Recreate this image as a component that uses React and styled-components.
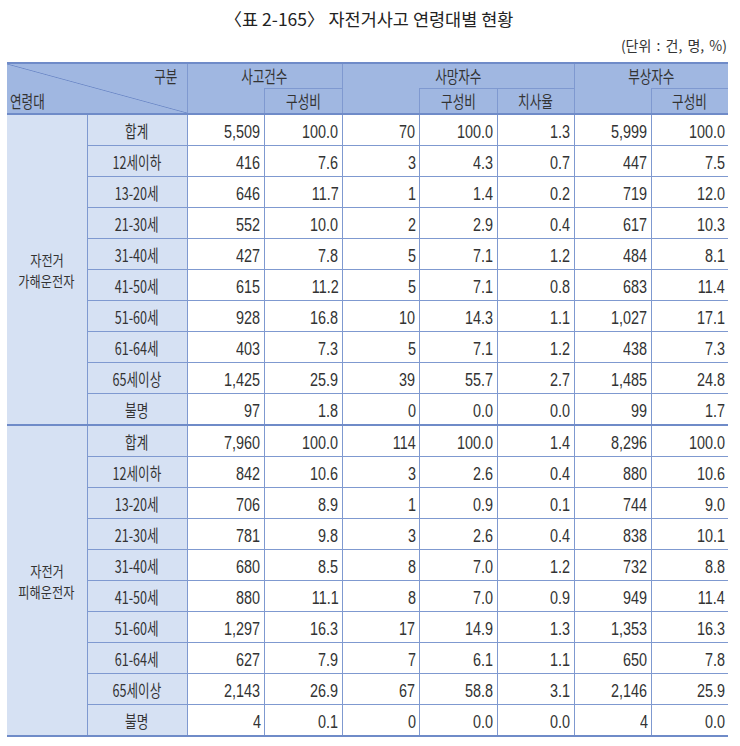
import React from "react";
import styled, { createGlobalStyle } from "styled-components";

const GlobalStyle = createGlobalStyle`
  html, body {
    margin: 0;
    padding: 0;
    background: #fff;
  }
  body {
    font-family: "Noto Sans CJK KR", sans-serif;
    color: #333;
  }
`;

const Page = styled.div`
  width: 740px;
  padding: 0 12px 0 7px;
  box-sizing: border-box;
`;

const Title = styled.h1`
  margin: 0;
  padding-top: 8px;
  height: 36px;
  box-sizing: border-box;
  text-align: center;
  font-weight: 400;
  font-size: 17.5px;
  line-height: 22px;
  color: #222;
  padding-left: 3px;
`;

const Unit = styled.div`
  text-align: right;
  font-size: 14px;
  line-height: 18px;
  height: 26px;
  word-spacing: 2px;
  padding-right: 1px;
  color: #333;
`;

const Table = styled.table`
  width: 721px;
  border-collapse: collapse;
  table-layout: fixed;
  font-size: 17px;
  border-top: 2px solid #6f8bc8;
  border-bottom: 2px solid #6f8bc8;
`;

// condensed look of the source document: glyphs are squeezed horizontally
const Txt = styled.span`
  display: inline-block;
  white-space: nowrap;
  transform: scaleX(${(p) => p.$sx || 0.74});
  transform-origin: ${(p) => p.$origin || "center"} center;
`;

const NumTxt = styled(Txt)`
  font-family: "Liberation Sans", Arial, sans-serif;
  font-size: 18px;
`;

const Head = styled.th`
  background: #a0b7e1;
  font-weight: 400;
  height: 24px;
  padding: 0;
  line-height: 20px;
  border: 1px solid #7f99d0;
  border-top: ${(p) => (p.$open ? "hidden" : "1px solid #7f99d0")};
  text-align: center;
  &:first-child {
    border-left: none;
  }
  &:last-child {
    border-right: none;
  }
`;

const Corner = styled.th`
  background: #a0b7e1
    linear-gradient(
      to top right,
      transparent calc(50% - 0.8px),
      #6f8bc8 50%,
      transparent calc(50% + 0.8px)
    );
  font-weight: 400;
  padding: 0;
  border: 1px solid #7f99d0;
  border-left: none;
`;

const CornerInner = styled.div`
  height: 49px;
  display: flex;
  flex-direction: column;
  justify-content: space-between;
  padding: 1px 9px 1px 3px;
  box-sizing: border-box;
  line-height: 22px;
`;

const CornerTop = styled.div`
  align-self: flex-end;
`;

const CornerBottom = styled.div`
  align-self: flex-start;
`;

const Group = styled.td`
  background: #d6e1f3;
  text-align: center;
  font-size: 14.5px;
  line-height: 21px;
  padding: 0;
  border: 1px solid #7f99d0;
  border-left: none;
`;

const GroupLine = styled.div`
  display: flex;
  justify-content: center;
`;

const Label = styled.td`
  background: #d6e1f3;
  text-align: center;
  padding: 0;
  height: 30px;
  border: 1px solid #7f99d0;
`;

const Num = styled.td`
  background: #fff;
  text-align: right;
  padding: 0 3px 0 0;
  border: 1px solid #7f99d0;
  &:last-child {
    border-right: none;
  }
`;

const Row = styled.tr`
  border-top: ${(p) => (p.$first ? "2px solid #6f8bc8" : "none")};
`;

const groups = [
  {
    name: ["자전거", "가해운전자"],
    rows: [
      ["합계", "5,509", "100.0", "70", "100.0", "1.3", "5,999", "100.0"],
      ["12세이하", "416", "7.6", "3", "4.3", "0.7", "447", "7.5"],
      ["13-20세", "646", "11.7", "1", "1.4", "0.2", "719", "12.0"],
      ["21-30세", "552", "10.0", "2", "2.9", "0.4", "617", "10.3"],
      ["31-40세", "427", "7.8", "5", "7.1", "1.2", "484", "8.1"],
      ["41-50세", "615", "11.2", "5", "7.1", "0.8", "683", "11.4"],
      ["51-60세", "928", "16.8", "10", "14.3", "1.1", "1,027", "17.1"],
      ["61-64세", "403", "7.3", "5", "7.1", "1.2", "438", "7.3"],
      ["65세이상", "1,425", "25.9", "39", "55.7", "2.7", "1,485", "24.8"],
      ["불명", "97", "1.8", "0", "0.0", "0.0", "99", "1.7"],
    ],
  },
  {
    name: ["자전거", "피해운전자"],
    rows: [
      ["합계", "7,960", "100.0", "114", "100.0", "1.4", "8,296", "100.0"],
      ["12세이하", "842", "10.6", "3", "2.6", "0.4", "880", "10.6"],
      ["13-20세", "706", "8.9", "1", "0.9", "0.1", "744", "9.0"],
      ["21-30세", "781", "9.8", "3", "2.6", "0.4", "838", "10.1"],
      ["31-40세", "680", "8.5", "8", "7.0", "1.2", "732", "8.8"],
      ["41-50세", "880", "11.1", "8", "7.0", "0.9", "949", "11.4"],
      ["51-60세", "1,297", "16.3", "17", "14.9", "1.3", "1,353", "16.3"],
      ["61-64세", "627", "7.9", "7", "6.1", "1.1", "650", "7.8"],
      ["65세이상", "2,143", "26.9", "67", "58.8", "3.1", "2,146", "25.9"],
      ["불명", "4", "0.1", "0", "0.0", "0.0", "4", "0.0"],
    ],
  },
];

const widths = [80, 100, 77, 78, 77, 78, 77, 77, 77];

export default function App() {
  return (
    <Page>
      <GlobalStyle />
      <Title>〈표 2-165〉 자전거사고 연령대별 현황</Title>
      <Unit>(단위 : 건, 명, %)</Unit>
      <Table>
        <colgroup>
          {widths.map((w, i) => (
            <col key={i} style={{ width: w }} />
          ))}
        </colgroup>
        <thead>
          <tr>
            <Corner colSpan={2} rowSpan={2}>
              <CornerInner>
                <CornerTop>
                  <Txt $origin="right">구분</Txt>
                </CornerTop>
                <CornerBottom>
                  <Txt $origin="left">연령대</Txt>
                </CornerBottom>
              </CornerInner>
            </Corner>
            <Head colSpan={2}>
              <Txt>사고건수</Txt>
            </Head>
            <Head colSpan={3}>
              <Txt>사망자수</Txt>
            </Head>
            <Head colSpan={2}>
              <Txt>부상자수</Txt>
            </Head>
          </tr>
          <tr>
            <Head $open />
            <Head>
              <Txt>구성비</Txt>
            </Head>
            <Head $open />
            <Head>
              <Txt>구성비</Txt>
            </Head>
            <Head>
              <Txt>치사율</Txt>
            </Head>
            <Head $open />
            <Head>
              <Txt>구성비</Txt>
            </Head>
          </tr>
        </thead>
        {groups.map((g) => (
          <tbody key={g.name[1]}>
            {g.rows.map((r, i) => (
              <Row key={r[0]} $first={i === 0}>
                {i === 0 && (
                  <Group rowSpan={g.rows.length}>
                    {g.name.map((line) => (
                      <GroupLine key={line}>
                        <Txt $sx={0.84}>{line}</Txt>
                      </GroupLine>
                    ))}
                  </Group>
                )}
                <Label>
                  <Txt>{r[0]}</Txt>
                </Label>
                {r.slice(1).map((v, j) => (
                  <Num key={j}>
                    <NumTxt $sx={0.8} $origin="right">
                      {v}
                    </NumTxt>
                  </Num>
                ))}
              </Row>
            ))}
          </tbody>
        ))}
      </Table>
    </Page>
  );
}
